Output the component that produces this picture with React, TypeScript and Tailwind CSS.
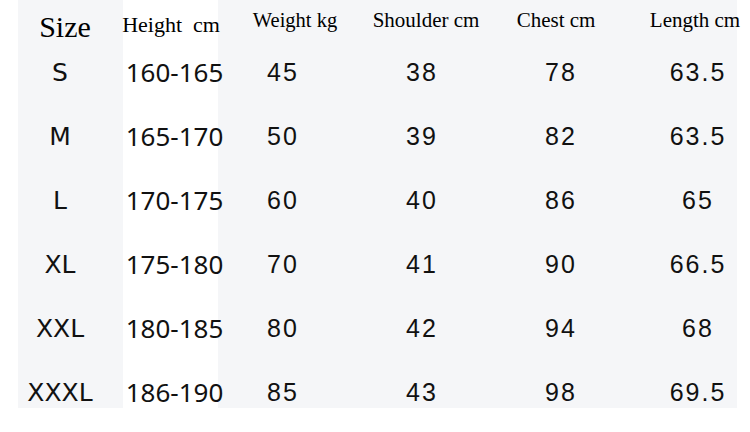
import React from 'react';

const rows = [
  ['S', '160-165', '45', '38', '78', '63.5'],
  ['M', '165-170', '50', '39', '82', '63.5'],
  ['L', '170-175', '60', '40', '86', '65'],
  ['XL', '175-180', '70', '41', '90', '66.5'],
  ['XXL', '180-185', '80', '42', '94', '68'],
  ['XXXL', '186-190', '85', '43', '98', '69.5'],
];

const serif = "font-['Liberation_Serif',serif] leading-none whitespace-pre text-black";
const num = "font-['Liberation_Sans',Arial,sans-serif] text-[25px] leading-none tracking-[2px] text-[#111] whitespace-nowrap";

export default function App() {
  return (
    <div className="w-[750px] h-[432px] bg-white">
      <div className="ml-[18px] w-[719px] h-[408px] bg-[#f5f6f8]">
        <div className="grid grid-cols-[105px_95px_128px_150px_128px_113px]">
          {/* header */}
          <div className="h-[40px] flex justify-center items-start pt-[12px] pr-[11px]">
            <span className={`${serif} text-[30px]`}>Size</span>
          </div>
          <div className="h-[40px] flex justify-center items-start pt-[14px] pl-[1px] bg-white">
            <span className={`${serif} text-[22px]`}>Height  cm</span>
          </div>
          <div className="h-[40px] flex justify-center items-start pt-[10px] pl-[26px]">
            <span className={`${serif} text-[20.5px]`}>Weight kg</span>
          </div>
          <div className="h-[40px] flex justify-center items-start pt-[10px] pl-[10px]">
            <span className={`${serif} text-[21px]`}>Shoulder cm</span>
          </div>
          <div className="h-[40px] flex justify-center items-start pt-[10px] pr-[8px]">
            <span className={`${serif} text-[21px]`}>Chest cm</span>
          </div>
          <div className="h-[40px] flex justify-center items-start pt-[10px] pl-[29px]">
            <span className={`${serif} text-[21px]`}>Length cm</span>
          </div>

          {rows.map((r) => (
            <React.Fragment key={r[0]}>
              <div className="h-[64px] flex justify-center items-center pr-[21px]">
                <span className="font-['DejaVu_Sans',sans-serif] text-[25px] leading-none text-[#111] whitespace-nowrap">{r[0]}</span>
              </div>
              <div className="h-[64px] flex justify-center items-center pl-[8px] bg-white">
                <span className="font-['Noto_Sans',sans-serif] text-[26px] leading-none text-[#111] whitespace-nowrap">{r[1]}</span>
              </div>
              <div className="h-[64px] flex justify-center items-center pl-[2px]">
                <span className={num}>{r[2]}</span>
              </div>
              <div className="h-[64px] flex justify-center items-center pl-[2px]">
                <span className={num}>{r[3]}</span>
              </div>
              <div className="h-[64px] flex justify-center items-center pl-[2px]">
                <span className={num}>{r[4]}</span>
              </div>
              <div className="h-[64px] flex justify-center items-center pl-[35px]">
                <span className={num}>{r[5]}</span>
              </div>
            </React.Fragment>
          ))}
        </div>
      </div>
    </div>
  );
}
